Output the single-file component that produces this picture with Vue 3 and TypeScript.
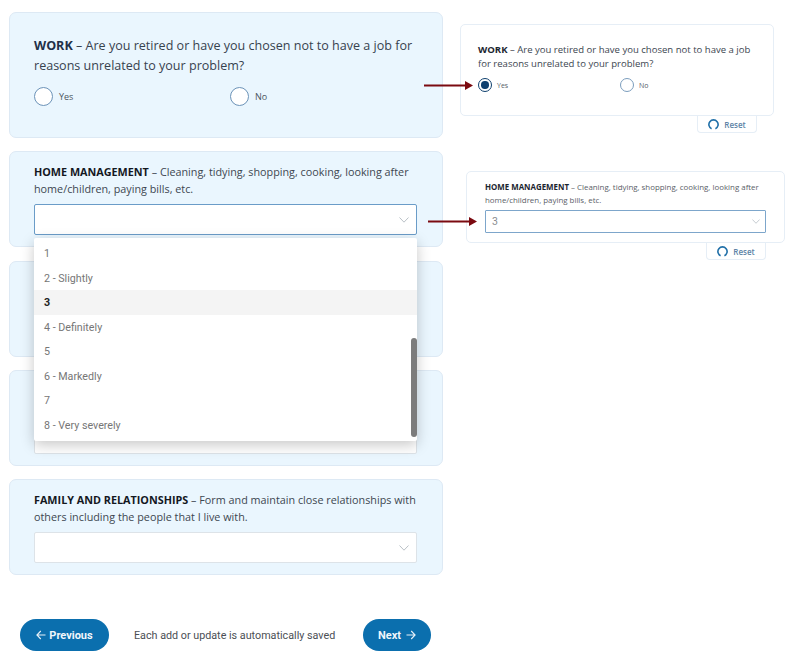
<script setup lang="ts">
const options = [
  { label: '1', active: false },
  { label: '2 - Slightly', active: false },
  { label: '3', active: true },
  { label: '4 - Definitely', active: false },
  { label: '5', active: false },
  { label: '6 - Markedly', active: false },
  { label: '7', active: false },
  { label: '8 - Very severely', active: false },
]
</script>

<template>
  <div class="page">
    <main class="left">
      <section class="card work">
        <p class="q-lg"><b>WORK</b> – Are you retired or have you chosen not to have a job for reasons unrelated to your problem?</p>
        <div class="radios">
          <label class="radio"><i class="dot"></i><span>Yes</span></label>
          <label class="radio"><i class="dot"></i><span>No</span></label>
        </div>
      </section>

      <section class="card home">
        <p class="q"><b>HOME MANAGEMENT</b> – Cleaning, tidying, shopping, cooking, looking after home/children, paying bills, etc.</p>
        <div class="select focus">
          <svg class="chev" width="10" height="6" viewBox="0 0 10 6"><path d="M.5.5 5 5.2 9.5.5" /></svg>
        </div>
        <ul class="menu">
          <li v-for="o in options" :key="o.label" :class="{ active: o.active }">{{ o.label }}</li>
          <i class="thumb"></i>
        </ul>
      </section>

      <section class="card"><div class="blank"></div><div class="select"></div></section>
      <section class="card"><div class="blank"></div><div class="select"></div></section>

      <section class="card">
        <p class="q"><b>FAMILY AND RELATIONSHIPS</b> – Form and maintain close relationships with others including the people that I live with.</p>
        <div class="select">
          <svg class="chev" width="10" height="6" viewBox="0 0 10 6"><path d="M.5.5 5 5.2 9.5.5" /></svg>
        </div>
      </section>

      <footer class="foot">
        <button class="btn prev">
          <svg width="10" height="10" viewBox="0 0 10 10"><path d="M9.5 5H1M4.8 1 .9 5l3.9 4" /></svg>
          Previous
        </button>
        <span class="saved">Each add or update is automatically saved</span>
        <button class="btn next">
          Next
          <svg width="10" height="10" viewBox="0 0 10 10"><path d="M.5 5H9M5.2 1l3.9 4-3.9 4" /></svg>
        </button>
      </footer>
    </main>

    <aside class="right">
      <section class="mini m1">
        <p class="q-sm"><b>WORK</b> – Are you retired or have you chosen not to have a job for reasons unrelated to your problem?</p>
        <div class="mini-radios">
          <label class="radio-sm"><i class="dot-sm on"></i><span>Yes</span></label>
          <label class="radio-sm"><i class="dot-sm"></i><span>No</span></label>
        </div>
      </section>
      <div class="reset r1">
        <svg width="11" height="11" viewBox="0 0 11 11"><path d="M3.6 9.7A4.6 4.6 0 1 1 7.4 9.7" /></svg>
        <span>Reset</span>
      </div>

      <section class="mini m2">
        <p class="q-xs"><b>HOME MANAGEMENT</b> – Cleaning, tidying, shopping, cooking, looking after home/children, paying bills, etc.</p>
        <div class="mini-select">
          <span>3</span>
          <svg class="chev" width="8" height="5" viewBox="0 0 10 6"><path d="M.5.5 5 5.2 9.5.5" /></svg>
        </div>
      </section>
      <div class="reset r2">
        <svg width="11" height="11" viewBox="0 0 11 11"><path d="M3.6 9.7A4.6 4.6 0 1 1 7.4 9.7" /></svg>
        <span>Reset</span>
      </div>
    </aside>

    <svg class="arrow a1" width="49" height="9" viewBox="0 0 49 9"><path d="M0 3.5h41V0l8 4.5-8 4.5V5.5H0z" /></svg>
    <svg class="arrow a2" width="49" height="9" viewBox="0 0 49 9"><path d="M0 3.5h41V0l8 4.5-8 4.5V5.5H0z" /></svg>
  </div>
</template>

<style>
html, body { margin: 0; background: #fff; }
</style>

<style scoped>
.page {
  position: relative;
  width: 793px;
  height: 658px;
  overflow: hidden;
  display: flex;
  font-family: "Open Sans", sans-serif;
  color: #3c4650;
  background: #fff;
}
p { margin: 0; }
b { color: #1b2530; font-weight: 700; }

.left {
  width: 434px;
  margin-left: 9px;
  padding-top: 12px;
  display: flex;
  flex-direction: column;
  gap: 13px;
  flex: none;
}
.card {
  position: relative;
  box-sizing: border-box;
  height: 96px;
  padding: 11px 25px 0 24px;
  background: #eaf6fe;
  border: 1px solid #dde9f4;
  border-radius: 7px;
}
.card.work { height: 126px; padding-top: 23px; }
.card.home { margin-bottom: 1px; }
.q-lg { font-size: 12.55px; line-height: 20px; color: #37424e; }
.q-lg b { color: #1e3048; }
.q { font-size: 10.8px; line-height: 17px; height: 34px; color: #3d4650; }
.q b { color: #14181f; }
.blank { height: 34px; }

.radios { display: flex; margin-top: 11px; }
.radio { width: 196px; flex: none; display: flex; align-items: center; gap: 6px; font-size: 9px; color: #4a5560; }
.dot { width: 19px; height: 19px; box-sizing: border-box; border: 1.5px solid #6c93b8; border-radius: 50%; background: #fff; flex: none; }

.select {
  position: relative;
  box-sizing: border-box;
  height: 31px;
  margin-top: 7px;
  background: #fff;
  border: 1px solid #dde3e8;
  border-radius: 2px;
}
.select.focus { border: 1.5px solid #6a9cc8; }
.chev { position: absolute; right: 7px; top: 12px; fill: none; stroke: #b9c0c6; stroke-width: 1; }

.menu {
  position: absolute;
  z-index: 3;
  left: 24px;
  top: 86px;
  width: 383px;
  height: 203px;
  margin: 0;
  padding: 3px 0 0;
  box-sizing: border-box;
  list-style: none;
  background: #fff;
  border-radius: 2px;
  box-shadow: 0 4px 14px rgba(0, 0, 0, 0.22);
  font-family: Roboto, sans-serif;
  font-size: 10.7px;
  overflow: hidden;
}
.menu li {
  height: 24.5px;
  line-height: 26px;
  padding-left: 10px;
  color: #767676;
}
.menu li.active { background: #f4f4f4; color: #222; font-weight: 700; }
.thumb {
  position: absolute;
  right: 0;
  top: 100px;
  width: 6px;
  height: 99px;
  border-radius: 3px;
  background: #7c7c7c;
}

.foot {
  display: flex;
  align-items: center;
  margin: 31px 0 0 11px;
}
.btn {
  height: 32px;
  padding: 0;
  border: 0;
  border-radius: 16px;
  background: #0b6fae;
  color: #f0f6fb;
  font-family: Roboto, sans-serif;
  font-size: 11px;
  font-weight: 700;
  display: flex;
  align-items: center;
  justify-content: center;
  gap: 3px;
}
.btn svg { fill: none; stroke: #e8f1f8; stroke-width: 1.1; }
.prev { width: 89px; }
.next { width: 68px; gap: 5px; }
.saved { font-family: Roboto, sans-serif; font-size: 10.75px; color: #4b4f55; width: 254px; padding-left: 25px; box-sizing: border-box; }

.right { position: relative; margin-left: 17px; padding-top: 24px; flex: none; width: 330px; }
.mini {
  box-sizing: border-box;
  background: #fff;
  border: 1px solid #e6eef6;
  border-radius: 5px;
}
.m1 { width: 314px; height: 92px; padding: 18px 17px 0; }
.m2 { width: 319px; height: 72px; margin: 38px 0 0 6px; padding: 9px 18px 0; }
.q-sm { font-size: 9.55px; line-height: 14px; color: #3c4650; }
.q-xs { font-size: 7.9px; line-height: 12.5px; height: 25px; color: #5a6168; }
.mini-radios { display: flex; margin-top: 7px; }
.radio-sm { width: 142px; flex: none; display: flex; align-items: center; gap: 5px; font-size: 7px; color: #566069; }
.dot-sm { position: relative; width: 14px; height: 14px; box-sizing: border-box; border: 1.2px solid #7b9dbd; border-radius: 50%; flex: none; background: #fff; }
.dot-sm.on { border-color: #0e3f6e; }
.dot-sm.on::after { content: ""; position: absolute; inset: 2.3px; border-radius: 50%; background: #0e3f6e; }
.mini-select {
  position: relative;
  box-sizing: border-box;
  height: 23px;
  margin-top: 4px;
  padding-left: 6px;
  line-height: 21px;
  font-family: Roboto, sans-serif;
  font-size: 10.5px;
  color: #8a8d90;
  border: 1px solid #7da6cb;
  border-radius: 1px;
}
.mini-select .chev { right: 5px; top: 8px; }
.reset {
  box-sizing: border-box;
  width: 60px;
  height: 17px;
  display: flex;
  align-items: center;
  justify-content: center;
  gap: 5px;
  font-size: 8px;
  font-weight: 600;
  color: #5d84a6;
  background: #fff;
  border: 1px solid #e6eef6;
  border-top: 0;
  border-radius: 0 0 4px 4px;
}
.reset svg { fill: none; stroke: #1f6fa8; stroke-width: 1.6; }
.r1 { margin-left: 237px; }
.r2 { margin-left: 246px; }

.arrow { position: absolute; fill: #7b0a10; z-index: 4; }
.a1 { left: 424px; top: 81px; }
.a2 { left: 428px; top: 217px; }
</style>
